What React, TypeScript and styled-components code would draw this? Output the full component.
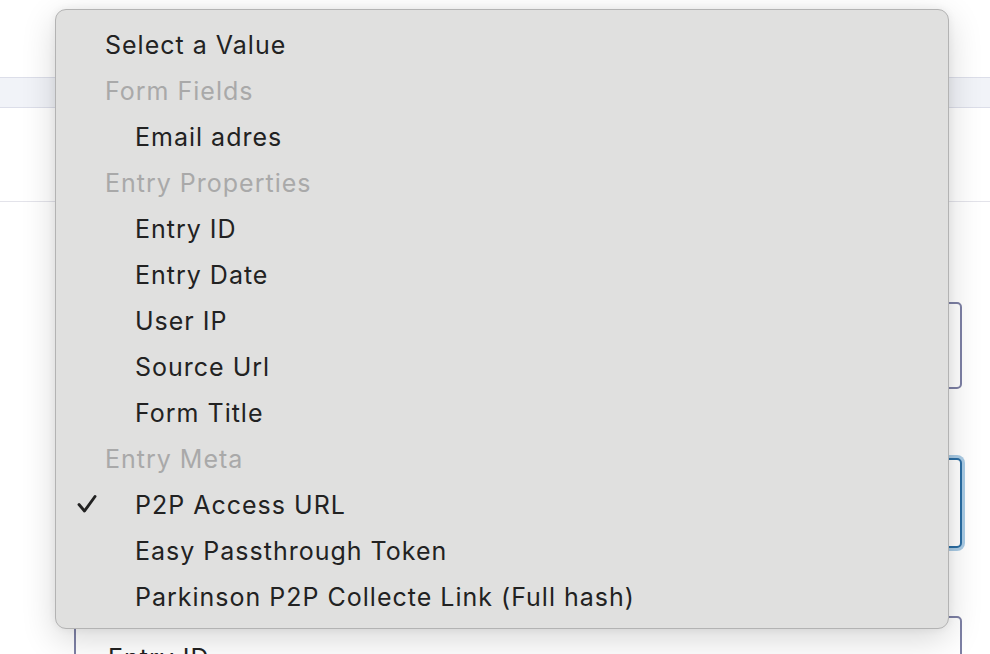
import React from "react";
import styled, { createGlobalStyle } from "styled-components";

const Global = createGlobalStyle`
  html, body { margin: 0; padding: 0; background: #ffffff; }
  body { font-family: Inter, "Noto Sans", sans-serif; overflow: hidden; }
  * { box-sizing: border-box; }
`;

const Page = styled.div`
  position: relative;
  width: 990px;
  height: 654px;
  overflow: hidden;
  background: #ffffff;
`;

const TopSpace = styled.div`
  height: 77px;
`;

const TabBand = styled.div`
  height: 31px;
  background: #f1f3f8;
  border-top: 1px solid #dcdee9;
  border-bottom: 1px solid #dcdee9;
`;

const Intro = styled.div`
  height: 94px;
  border-bottom: 1px solid #e3e3ea;
`;

const Form = styled.div`
  display: flex;
  flex-direction: column;
  padding: 100px 28px 0 74px;
`;

const Field = styled.div<{ $focused?: boolean; $gap: number }>`
  height: ${(p) => (p.$focused ? 90 : 87)}px;
  margin-bottom: ${(p) => p.$gap}px;
  border-radius: 5px;
  border: ${(p) => (p.$focused ? "2px solid #2a6da3" : "2px solid #7d80a5")};
  box-shadow: ${(p) => (p.$focused ? "0 0 0 3px #a9cbe5" : "none")};
  background: #ffffff;
  padding: 25px 32px;
  font-size: 25px;
  letter-spacing: 1px;
  color: #222;
`;

const Menu = styled.div`
  position: absolute;
  left: 55px;
  top: 9px;
  width: 894px;
  height: 620px;
  background: #e0e0df;
  border: 1px solid #b3b3b3;
  border-radius: 11px;
  box-shadow: 0 10px 34px rgba(0, 0, 0, 0.16), 0 0 8px rgba(0, 0, 0, 0.06);
  padding: 12px 0 0 0;
  display: flex;
  flex-direction: column;
`;

const Row = styled.div<{ $kind: "item" | "header" | "sub" }>`
  position: relative;
  height: 46px;
  display: flex;
  align-items: center;
  padding-left: ${(p) => (p.$kind === "sub" ? 79 : 49)}px;
  font-size: 25px;
  letter-spacing: 1px;
  color: ${(p) => (p.$kind === "header" ? "#a9a9a9" : "#222222")};
  white-space: nowrap;
`;

const Check = styled.svg`
  position: absolute;
  left: 21px;
  top: 12px;
  width: 20px;
  height: 20px;
`;

type Item = { label: string; kind: "item" | "header" | "sub"; checked?: boolean };

const items: Item[] = [
  { label: "Select a Value", kind: "item" },
  { label: "Form Fields", kind: "header" },
  { label: "Email adres", kind: "sub" },
  { label: "Entry Properties", kind: "header" },
  { label: "Entry ID", kind: "sub" },
  { label: "Entry Date", kind: "sub" },
  { label: "User IP", kind: "sub" },
  { label: "Source Url", kind: "sub" },
  { label: "Form Title", kind: "sub" },
  { label: "Entry Meta", kind: "header" },
  { label: "P2P Access URL", kind: "sub", checked: true },
  { label: "Easy Passthrough Token", kind: "sub" },
  { label: "Parkinson P2P Collecte Link (Full hash)", kind: "sub" },
];

export default function App() {
  return (
    <Page>
      <Global />
      <TopSpace />
      <TabBand />
      <Intro />
      <Form>
        <Field $gap={69} />
        <Field $focused $gap={68} />
        <Field $gap={0}>Entry ID</Field>
      </Form>
      <Menu>
        {items.map((it) => (
          <Row key={it.label} $kind={it.kind}>
            {it.checked && (
              <Check viewBox="0 0 20 20">
                <path
                  d="M2 10.5 L7.5 17 L18 2.5"
                  fill="none"
                  stroke="#222"
                  strokeWidth="2.9"
                  strokeLinecap="round"
                  strokeLinejoin="round"
                />
              </Check>
            )}
            {it.label}
          </Row>
        ))}
      </Menu>
    </Page>
  );
}
